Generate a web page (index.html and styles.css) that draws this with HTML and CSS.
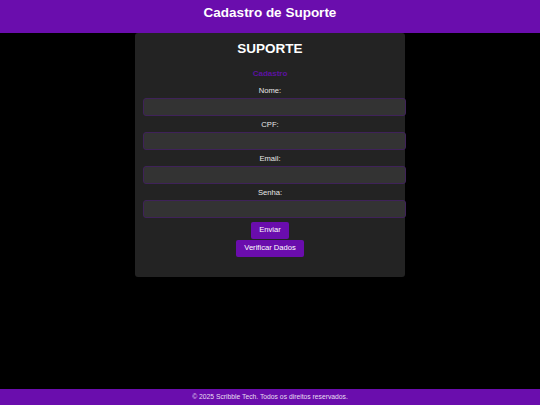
FILE: index.html
```html
<!DOCTYPE html>
<html lang="pt-BR">
<head>
<meta charset="utf-8">
<title>Cadastro de Suporte</title>
<link rel="stylesheet" href="styles.css">
</head>
<body>
<header class="site-header">
  <h1 class="site-title">Cadastro de Suporte</h1>
</header>
<main class="page">
  <section class="card">
    <h2 class="card-title">SUPORTE</h2>
    <h3 class="card-sub">Cadastro</h3>
    <form class="form">
      <label class="field-label" for="nome">Nome:</label>
      <input class="field-input" id="nome" type="text">
      <label class="field-label" for="cpf">CPF:</label>
      <input class="field-input" id="cpf" type="text">
      <label class="field-label" for="email">Email:</label>
      <input class="field-input" id="email" type="email">
      <label class="field-label" for="senha">Senha:</label>
      <input class="field-input" id="senha" type="password">
      <div class="actions">
        <button class="btn" type="button">Enviar</button>
        <button class="btn" type="button">Verificar Dados</button>
      </div>
    </form>
  </section>
</main>
<footer class="site-footer">
  <p class="footer-text">© 2025 Scribble Tech. Todos os direitos reservados.</p>
</footer>
</body>
</html>
```
FILE: styles.css
```css
* { box-sizing: border-box; }
html, body { margin: 0; padding: 0; }
body {
  background: #000;
  color: #e6e6e6;
  font-family: "Liberation Sans", Arial, sans-serif;
  min-height: 100vh;
  display: flex;
  flex-direction: column;
}
.site-header {
  background: #6a0dad;
  padding: 4.8px 0 12.7px;
  text-align: center;
}
.site-title {
  margin: 0;
  font-size: 13.5px;
  line-height: 15.5px;
  font-weight: bold;
  color: #fff;
}
.page {
  flex: 1;
  display: flex;
  justify-content: center;
  align-items: flex-start;
}
.card {
  width: 270px;
  background: #232323;
  border-radius: 3px;
  padding: 8.4px 8.4px 20.3px;
  text-align: center;
}
.card-title {
  margin: 0;
  font-size: 13.5px;
  line-height: 15.5px;
  font-weight: bold;
  color: #fff;
}
.card-sub {
  margin: 11.8px 0 0;
  font-size: 8px;
  line-height: 9.2px;
  font-weight: bold;
  color: #5c12a0;
}
.form {
  display: flex;
  flex-direction: column;
  margin-top: 7.7px;
}
.field-label {
  display: block;
  font-size: 7.6px;
  line-height: 9px;
  color: #e8e8e8;
}
.field-input {
  display: block;
  box-sizing: content-box;
  width: 100%;
  height: 15.4px;
  padding: 0 3.5px;
  margin: 3.8px 0;
  background: #333;
  border: 1px solid #3f2259;
  border-radius: 3px;
  color: #fff;
  font: inherit;
  font-size: 7px;
  outline: none;
}
.actions {
  display: flex;
  flex-direction: column;
  align-items: center;
  gap: 0.7px;
  margin-top: 0.6px;
}
.btn {
  background: #6a0dad;
  color: #fff;
  border: none;
  border-radius: 2px;
  padding: 4.2px 8.4px;
  font-family: "Liberation Sans", Arial, sans-serif;
  font-size: 7.6px;
  line-height: 8.7px;
  cursor: pointer;
}
.site-footer {
  background: #6a0dad;
  padding: 4.2px 0;
  text-align: center;
}
.footer-text {
  margin: 0;
  font-size: 6.75px;
  line-height: 7.8px;
  color: #e8dff2;
}
```
